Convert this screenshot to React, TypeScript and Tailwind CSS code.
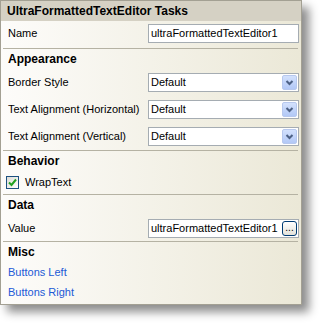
import React from "react";

const font = { fontFamily: '"Liberation Sans", Arial, sans-serif' };

function Sep() {
  return <div className="mx-[2px] mr-[3px] h-px bg-[#b5b2a3]" />;
}

function Header({ children }: { children: React.ReactNode }) {
  return (
    <div className="h-[20px] flex items-center pl-[7px] font-bold text-[12px] text-black">
      {children}
    </div>
  );
}

function DropArrow() {
  return (
    <div className="w-[15px] h-[15px] rounded-[2px] border border-[#b7c8ee] bg-gradient-to-b from-[#d3e1fd] to-[#b2c8f6] flex items-center justify-center">
      <svg width="9" height="7" viewBox="0 0 9 7">
        <path d="M1.5 2 L4.5 5 L7.5 2" fill="none" stroke="#4d6185" strokeWidth="2" />
      </svg>
    </div>
  );
}

function ComboRow({ label }: { label: string }) {
  return (
    <div className="h-[27px] flex items-center">
      <div className="w-[147px] pl-[7px] text-black">{label}</div>
      <div className="w-[151px] h-[19px] bg-white border border-[#a5acb2] flex items-center justify-between pl-[2px] pr-[1px]">
        <span>Default</span>
        <DropArrow />
      </div>
    </div>
  );
}

export default function App() {
  return (
    <div className="w-[322px] h-[325px] bg-white text-[11px] leading-none" style={font}>
      <div className="w-[302px] h-[305px] border border-[#a3a093] shadow-[7px_7px_9px_rgba(0,0,0,0.45)] bg-gradient-to-r from-[#fdfcfa] to-[#ebe8d7] flex flex-col">
        {/* TITLE */}
        <div className="h-[20px] bg-[#d5d1c4] flex items-center pl-[6px] font-bold text-[12px] text-black">
          UltraFormattedTextEditor Tasks
        </div>

        {/* NAME */}
        <div className="h-[25px] flex items-center">
          <div className="w-[147px] pl-[7px] text-black">Name</div>
          <div className="w-[151px] h-[19px] bg-white border border-[#a5acb2] flex items-center pl-[2px]">
            ultraFormattedTextEditor1
          </div>
        </div>
        <div className="h-[2px]" />
        <Sep />

        {/* APPEARANCE */}
        <Header>Appearance</Header>
        <ComboRow label="Border Style" />
        <ComboRow label="Text Alignment (Horizontal)" />
        <ComboRow label="Text Alignment (Vertical)" />
        <Sep />

        {/* BEHAVIOR */}
        <Header>Behavior</Header>
        <div className="h-[23px] flex items-center pl-[5px] gap-[6px]">
          <div className="w-[13px] h-[13px] border border-[#1c5180] bg-gradient-to-br from-[#dcdcd7] to-white flex items-center justify-center">
            <svg width="9" height="9" viewBox="0 0 9 9">
              <path d="M1 4.5 L3.5 7 L8 1.5" fill="none" stroke="#21a121" strokeWidth="2" />
            </svg>
          </div>
          <span className="text-black">WrapText</span>
        </div>
        <Sep />

        {/* DATA */}
        <Header>Data</Header>
        <div className="h-[26px] flex items-center">
          <div className="w-[147px] pl-[7px] text-black">Value</div>
          <div className="w-[151px] h-[19px] bg-white border border-[#a5acb2] flex items-center justify-between pl-[2px] pr-[1px]">
            <span>ultraFormattedTextEditor1</span>
            <div className="w-[15px] h-[15px] rounded-[3px] border border-[#003c74] bg-gradient-to-b from-white to-[#e3e2da] flex items-end justify-center pb-[2px] text-[10px] leading-none text-black">
              ...
            </div>
          </div>
        </div>
        <Sep />

        {/* MISC */}
        <Header>Misc</Header>
        <div className="h-[20px] flex items-center pl-[7px] text-[#2159d6]">Buttons Left</div>
        <div className="h-[20px] flex items-center pl-[7px] text-[#2159d6]">Buttons Right</div>
      </div>
    </div>
  );
}
